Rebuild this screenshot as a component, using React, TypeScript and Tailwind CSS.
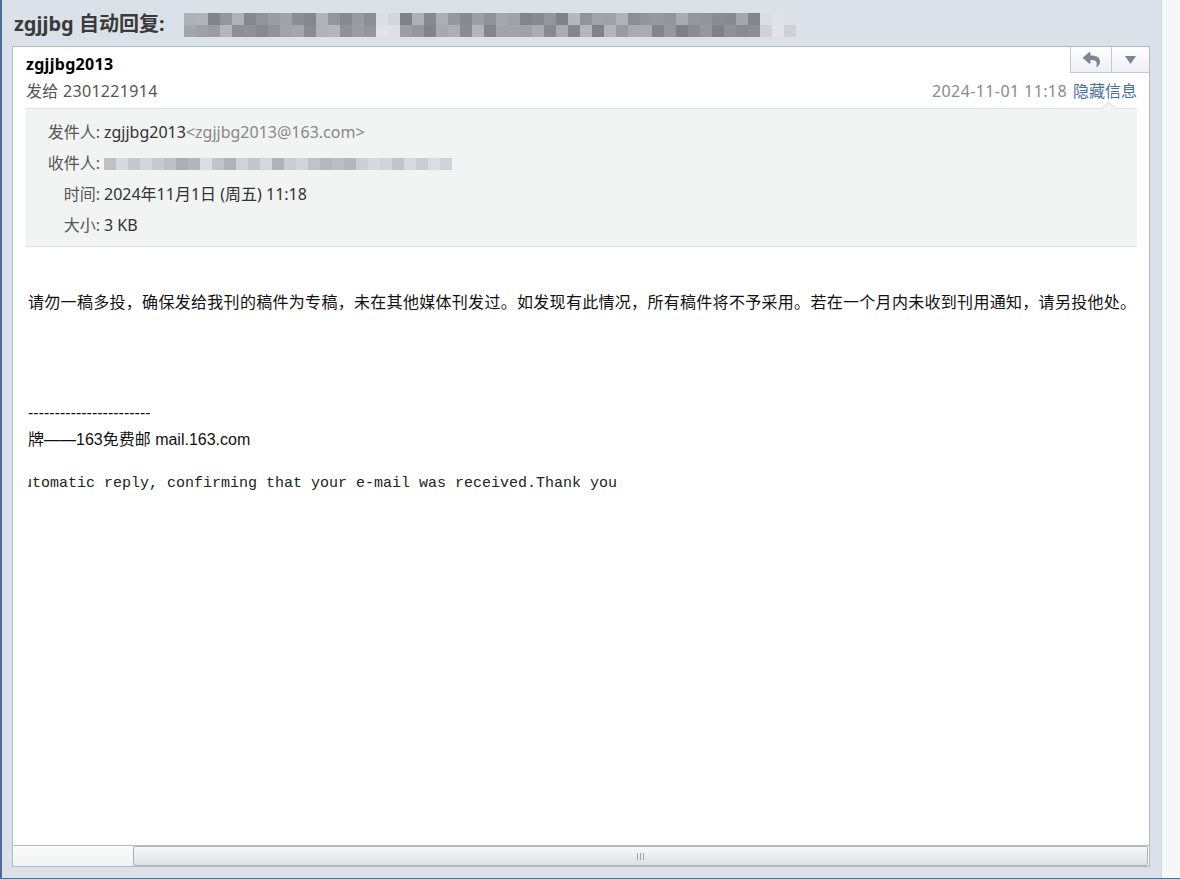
import React from 'react';
import { FaReply } from 'react-icons/fa';

// pixelated blur of hidden text, drawn as a grid of grey squares
function Mosaic({ cols, rows, cell, seed, lo, hi, lightFrom, lightAt = [] }: {
  cols: number; rows: number; cell: number; seed: number; lo: number; hi: number; lightFrom: number; lightAt?: number[];
}) {
  let s = seed;
  const rnd = () => {
    s = (s * 9301 + 49297) % 233280;
    return s / 233280;
  };
  const rects: React.ReactNode[] = [];
  for (let r = 0; r < rows; r++) {
    for (let c = 0; c < cols; c++) {
      let v = Math.round(lo + rnd() * (hi - lo));
      if (c >= lightFrom || lightAt.includes(c)) v = Math.round(205 + rnd() * 20);
      const col = `rgb(${v},${v + 3},${v + 8})`;
      rects.push(<rect key={`${r}-${c}`} x={c * cell} y={r * cell} width={cell} height={cell} fill={col} />);
    }
  }
  return (
    <svg width={cols * cell} height={rows * cell} className="block shrink-0">
      {rects}
    </svg>
  );
}

const InfoRow = ({ label, children }: { label: string; children: React.ReactNode }) => (
  <div className="flex items-center h-[31px]">
    <div className="w-[74px] text-right text-[#555]">{label}</div>
    <div className="pl-[4px] text-[#333] flex items-center">{children}</div>
  </div>
);

const App: React.FC = () => {
  return (
    <div className="w-[1180px] h-[879px] flex bg-[#dbe1e8] border-l-2 border-b border-[#4d6d99] overflow-hidden font-[family-name:'Noto_Sans','Noto_Sans_CJK_SC',sans-serif]">
      <div className="w-[1159px] flex flex-col">
        {/* subject */}
        <div className="h-[46px] flex items-center pl-3 pt-[2px]">
          <span className="text-[20px] font-bold text-[#3a3a3a] leading-[28px] whitespace-nowrap">zgjjbg 自动回复:</span>
          <div className="ml-[19px] mt-[1px]">
            <Mosaic cols={51} rows={2} cell={12} seed={17} lo={125} hi={180} lightFrom={48} lightAt={[16, 17]} />
          </div>
        </div>

        {/* message card */}
        <div className="ml-[10px] w-[1138px] h-[821px] bg-white border border-[#b4bac1] flex flex-col">
          <div className="flex justify-between h-[29px]">
            <div className="pl-[13px] pt-[5px] text-[16px] font-bold leading-[24px] text-black tracking-[0.3px]">zgjjbg2013</div>
            <div className="flex h-[26px] border-l border-b border-[#c3c8ce] bg-gradient-to-b from-[#ffffff] to-[#eef0f2]">
              <div className="w-[41px] flex items-center justify-center border-r border-[#c3c8ce]">
                <FaReply size={17} color="#7b8591" />
              </div>
              <div className="w-[37px] flex items-center justify-center">
                <svg width="11" height="8" viewBox="0 0 11 8">
                  <polygon points="0,0 11,0 5.5,8" fill="#7b8591" />
                </svg>
              </div>
            </div>
          </div>

          <div className="flex justify-between items-center h-[24px] mt-[3px] pl-[13px] pr-[12px] text-[16px]">
            <span className="text-[#555] tracking-[0.3px]">发给 2301221914</span>
            <span className="flex gap-[6px]">
              <span className="text-[#8a8a8a] tracking-[0.4px]">2024-11-01 11:18</span>
              <span className="text-[#4b6fa0]">隐藏信息</span>
            </span>
          </div>

          {/* details panel */}
          <div className="relative ml-[13px] mr-[12px] mt-[5px] bg-[#f1f4f3] border-y border-[#dde2e2] pt-[7px] pb-[6px] text-[16px]">
            <svg width="15" height="7" viewBox="0 0 15 7" className="absolute -top-[7px] right-[21px]">
              <polygon points="0,7 7.5,0.5 15,7" fill="#f1f4f3" />
              <polyline points="0,6.5 7.5,0.5 15,6.5" fill="none" stroke="#d6dbdb" strokeWidth="1" />
            </svg>
            <InfoRow label="发件人:">
              <span>zgjjbg2013</span>
              <span className="text-[#888]">&lt;zgjjbg2013@163.com&gt;</span>
            </InfoRow>
            <InfoRow label="收件人:">
              <div className="pt-[2px]">
                <Mosaic cols={29} rows={1} cell={12} seed={5} lo={170} hi={220} lightFrom={28} />
              </div>
            </InfoRow>
            <InfoRow label="时间:">2024年11月1日 (周五) 11:18</InfoRow>
            <InfoRow label="大小:">3 KB</InfoRow>
          </div>

          {/* body */}
          <div className="flex-1 pl-[15px] pt-[43px] text-[#111] overflow-hidden">
            <div className="text-[16px] leading-[24px] tracking-[0.3px] whitespace-nowrap">
              请勿一稿多投，确保发给我刊的稿件为专稿，未在其他媒体刊发过。如发现有此情况，所有稿件将不予采用。若在一个月内未收到刊用通知，请另投他处。
            </div>
            <div className="mt-[87px] text-[16px] leading-[24px] font-[family-name:'Liberation_Sans','Noto_Sans_CJK_SC',sans-serif]">
              -----------------------
            </div>
            <div className="mt-[3px] text-[16px] leading-[24px] font-[family-name:'Liberation_Sans','Noto_Sans_CJK_SC',sans-serif] whitespace-nowrap">
              牌——163免费邮 mail.163.com
            </div>
            <div className="mt-[20px] overflow-hidden">
              <div className="-ml-[5px] text-[15px] leading-[24px] text-[#222] whitespace-pre font-[family-name:'Liberation_Mono',monospace]">
                utomatic reply, confirming that your e-mail was received.Thank you
              </div>
            </div>
          </div>

          {/* horizontal scrollbar */}
          <div className="h-[21px] border-t border-[#b6bcc3] flex">
            <div className="w-[120px] bg-gradient-to-b from-[#fbfbfb] to-[#f1f2f3]" />
            <div className="flex-1 mr-[1px] border border-[#a9b1b9] rounded-[2px] bg-gradient-to-b from-[#f7f8f9] to-[#dde0e4] flex items-center justify-center">
              <div className="flex gap-[2px]">
                <div className="w-px h-[7px] bg-[#9ea5ad]" />
                <div className="w-px h-[7px] bg-[#9ea5ad]" />
                <div className="w-px h-[7px] bg-[#9ea5ad]" />
              </div>
            </div>
          </div>
        </div>
      </div>
      <div className="w-[19px] bg-[#f5f7f9] border-l border-[#cfd5dc]" />
    </div>
  );
};

export default App;
